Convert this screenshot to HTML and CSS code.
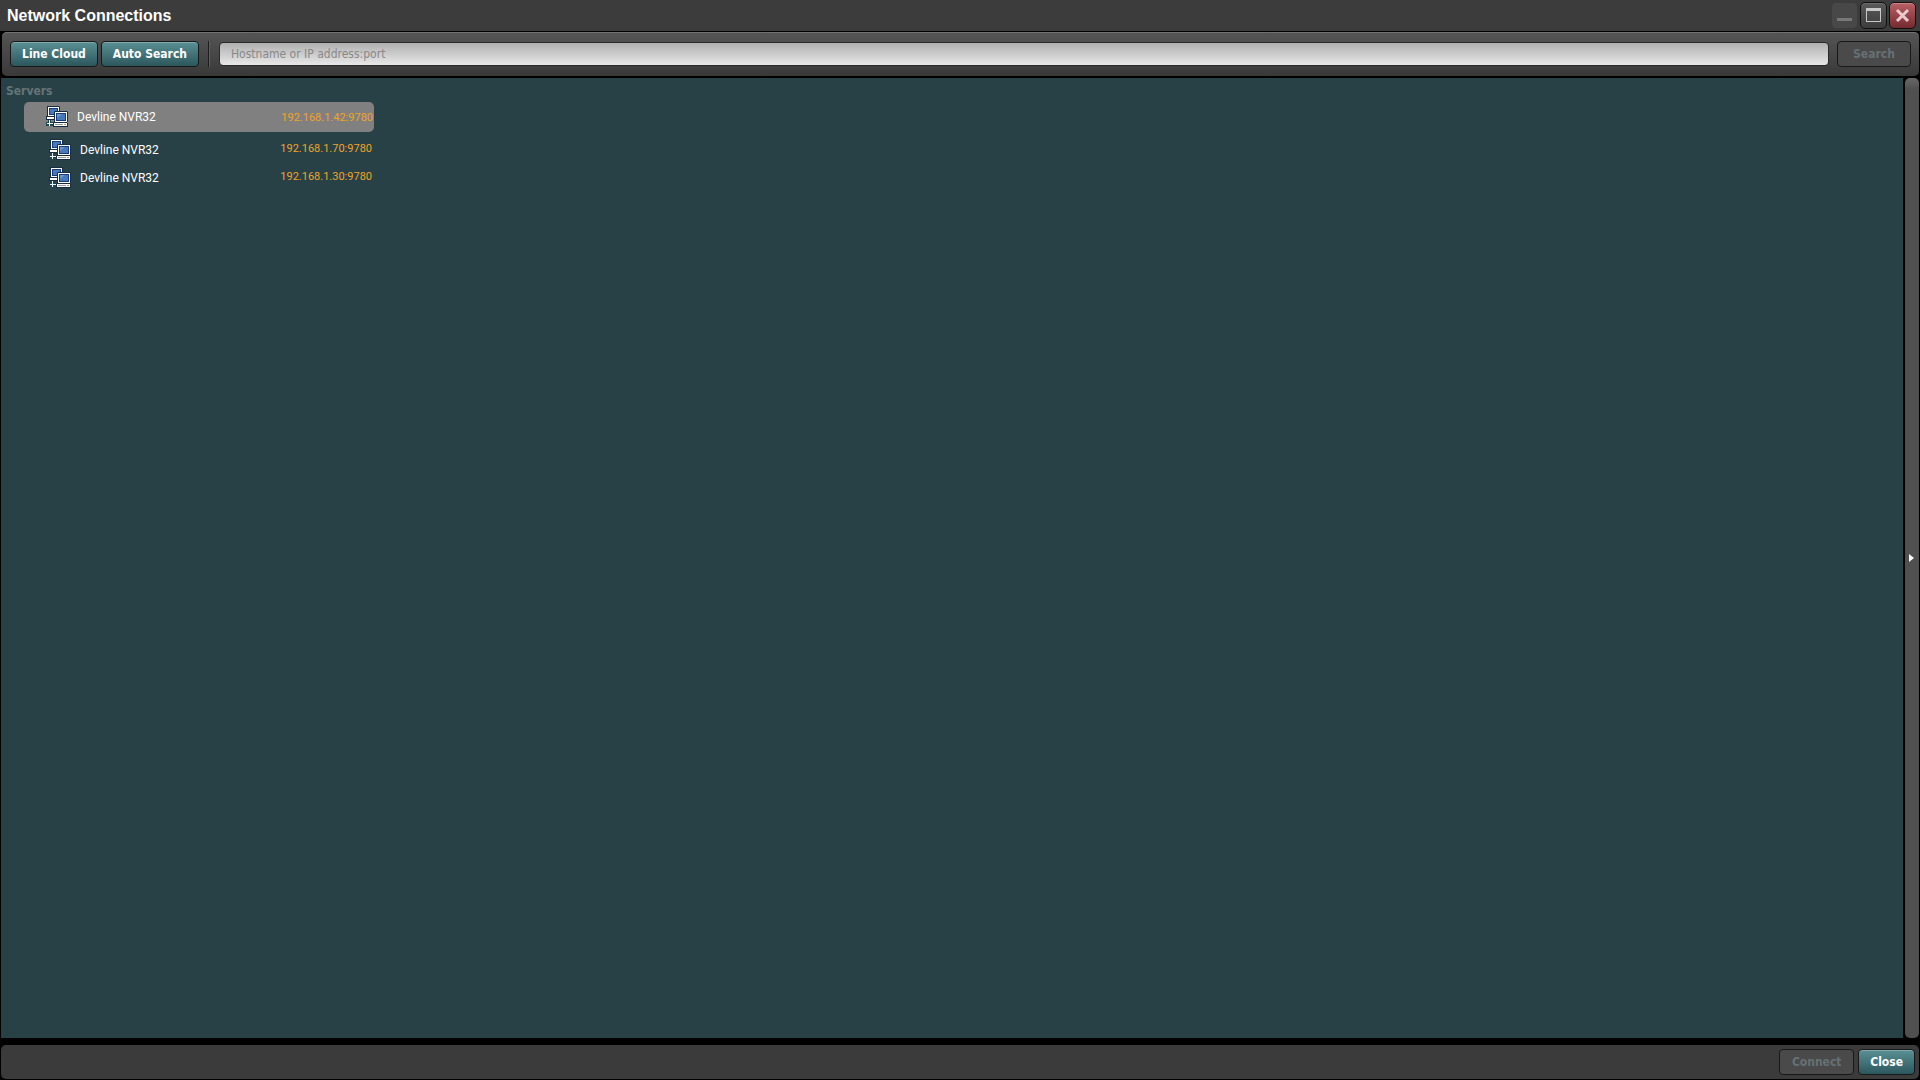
FILE: index.html
```html
<!DOCTYPE html>
<html lang="en">

<head>
    <meta charset="UTF-8">
    <meta name="viewport" content="width=device-width, initial-scale=1.0">
    <title>Network Connections</title>
    <link rel="stylesheet" href="styles.css">
</head>

<body>
    <!-- Shared server icon -->
    <svg class="defs" width="0" height="0">
        <symbol id="server-icon" viewBox="0 0 22 22">
            <path d="M1 0h12l1 1v9h1v4H0v-4h1z" fill="#172c42"/>
            <path d="M2 1h11v9H2zM1 11h13v2H1z" fill="#fff"/>
            <path d="M3 2h9v7H3z" fill="#173b7c"/>
            <path d="M4 3h7v5H4z" fill="#4778bb"/>
            <path d="M2 14h3v2h3v4H0v-4h2z" fill="#20464d"/>
            <path d="M3 14h1v3h4v1H4v2H3v-2H1v-1h2z" fill="#f0f6f6"/>
            <path d="M9 5h12l1 1v10h-1v1h1v4H7v-4h1V6z" fill="#172c42"/>
            <path d="M9 6h12v10H9zM8 17h13v3H8z" fill="#fff"/>
            <path d="M10 7h10v8H10z" fill="#173b7c"/>
            <path d="M11 8h8v6h-8z" fill="#4778bb"/>
            <path d="M11 8h5l-5 4z" fill="#6b98d0"/>
            <path d="M9 18h8v1H9z" fill="#8f989c"/>
            <path d="M18 18h2v1h-2z" fill="#d08a58"/>
        </symbol>
    </svg>

    <header class="titlebar">
        <h1>Network Connections</h1>
        <div class="window-controls">
            <button class="window-button minimize" aria-label="Minimize" disabled>
                <svg width="25" height="25"><path d="M5 15h15v3H5z" fill="#777"/></svg>
            </button>
            <button class="window-button" aria-label="Maximize">
                <svg width="25" height="25"><path d="M5 5h15v14H5zM6 8v10h13V8z" fill="#c8c8c8" fill-rule="evenodd"/></svg>
            </button>
            <button class="window-button quit" aria-label="Close window">
                <svg width="25" height="25"><path d="M7 7l11 11M18 7L7 18" stroke="#eacaca" stroke-width="3"/></svg>
            </button>
        </div>
    </header>

    <form class="toolbar">
        <button type="button" class="button">Line Cloud</button>
        <button type="button" class="button">Auto Search</button>
        <span class="separator"></span>
        <input class="address" type="text" aria-label="Address" placeholder="Hostname or IP address:port">
        <button class="button search" disabled>Search</button>
    </form>

    <main class="content">
        <section class="servers">
            <h2>Servers</h2>
            <ul class="server-list">
                <li class="server selected">
                    <svg class="server-icon"><use href="#server-icon"/></svg>
                    <span class="name">Devline NVR32</span>
                    <span class="ip">192.168.1.42:9780</span>
                </li>
                <li class="server">
                    <svg class="server-icon"><use href="#server-icon"/></svg>
                    <span class="name">Devline NVR32</span>
                    <span class="ip">192.168.1.70:9780</span>
                </li>
                <li class="server">
                    <svg class="server-icon"><use href="#server-icon"/></svg>
                    <span class="name">Devline NVR32</span>
                    <span class="ip">192.168.1.30:9780</span>
                </li>
            </ul>
        </section>
        <button class="panel-toggle" aria-label="Toggle side panel">
            <svg width="5" height="8"><path d="M0 0l5 4-5 4z" fill="#fff"/></svg>
        </button>
    </main>

    <footer class="footer">
        <button class="button connect" disabled>Connect</button>
        <button class="button">Close</button>
    </footer>
</body>

</html>
```
FILE: styles.css
```css
:root {
    --bar-color: #3c3c3c;
    --panel-color: #284146;
    --border-color: #181818;
    --ip-color: #f0a426;
}

* {
    box-sizing: border-box;
}

body {
    display: flex;
    flex-direction: column;
    height: 100vh;
    margin: 0;
    background-color: #000;
    font-family: Roboto, sans-serif;
    font-size: 12px;
    color: #fff;
}

h1,
h2,
ul {
    margin: 0;
    padding: 0;
}

button {
    padding: 0;
    font-family: inherit;
}

.defs {
    position: absolute;
}

/* Title bar */
.titlebar {
    display: flex;
    align-items: center;
    justify-content: space-between;
    height: 31px;
    padding: 0 4px 0 7px;
    background-color: var(--bar-color);
}

h1 {
    font: bold 16px "Liberation Sans", sans-serif;
}

.window-controls {
    display: flex;
    gap: 2px;
}

.window-button {
    width: 27px;
    height: 27px;
    border: 1px solid #101010;
    border-radius: 5px;
    background: linear-gradient(#5a5a5a, #3c3c3c);
    box-shadow: inset 0 1px #6c6c6c;
}

.window-button svg {
    display: block;
}

.minimize {
    border-color: #3c3c3c;
    background: #484848;
    box-shadow: none;
}

.quit {
    background: linear-gradient(#b86066, #732a2f);
    box-shadow: inset 0 1px #c9868a;
}

/* Toolbar */
.toolbar {
    display: flex;
    align-items: center;
    height: 44px;
    margin: 1px 1px 2px 2px;
    padding: 0 8px;
    border-radius: 5px;
    background: linear-gradient(#555, #393939);
    box-shadow: inset 0 1px #707070;
}

.button {
    height: 26px;
    padding: 0 11px;
    border: 1px solid var(--border-color);
    border-radius: 4px;
    background: linear-gradient(#5a9094, #2b575d);
    box-shadow: inset 0 1px #80aaae;
    font-family: "DejaVu Sans Condensed", "DejaVu Sans", sans-serif;
    font-size: 12px;
    font-weight: bold;
    color: #fff;
}

.button + .button {
    margin-left: 3px;
}

.button:disabled {
    background: #4a4a4a;
    box-shadow: none;
    color: #667174;
}

.separator {
    width: 2px;
    height: 26px;
    margin: 0 9px;
    border-left: 1px solid #1c1c1c;
    border-right: 1px solid #606060;
}

.address {
    flex: 1;
    min-width: 0;
    height: 24px;
    padding: 0 11px;
    border: 1px solid #292929;
    border-radius: 4px;
    background: linear-gradient(#b0b0b0, #e8e8e8);
    font-family: "DejaVu Sans Condensed", "DejaVu Sans", sans-serif;
    font-size: 12px;
    color: #222;
}

.address::placeholder {
    color: #888;
    opacity: 1;
}

.search {
    min-width: 74px;
    margin-left: 8px;
}

/* Server list */
.content {
    display: flex;
    flex: 1;
    min-height: 0;
    padding-left: 1px;
}

.servers {
    flex: 1;
    padding: 3px 5px;
    background-color: var(--panel-color);
}

h2 {
    margin-bottom: 1px;
    font: bold 12px/20px "DejaVu Sans Condensed", "DejaVu Sans", sans-serif;
    color: #657477;
}

.server-list {
    width: 350px;
    margin-left: 18px;
    list-style: none;
}

.server {
    display: flex;
    align-items: center;
    height: 28px;
    padding: 0 2px 0 25px;
}

.server.selected {
    height: 30px;
    margin-bottom: 4px;
    padding: 0 1px 0 22px;
    border-radius: 5px;
    background-color: #808080;
}

.server-icon {
    width: 22px;
    height: 22px;
}

.name {
    margin-left: 9px;
}

.ip {
    margin-left: auto;
    padding-bottom: 4px;
    font-size: 11px;
    color: var(--ip-color);
}

.selected .ip {
    padding-bottom: 0;
}

/* Side panel handle */
.panel-toggle {
    display: flex;
    align-items: center;
    width: 14px;
    margin: 0 1px 0 2px;
    padding: 0 0 0 4px;
    border: none;
    border-radius: 5px;
    background: linear-gradient(#686868, #505050 12px);
}

/* Footer */
.footer {
    display: flex;
    align-items: center;
    justify-content: flex-end;
    height: 34px;
    margin: 7px 1px 1px;
    padding: 0 4px;
    border-radius: 5px;
    background-color: #3b3b3b;
}

.connect {
    min-width: 75px;
}

.footer .button + .button {
    margin-left: 4px;
}
```
